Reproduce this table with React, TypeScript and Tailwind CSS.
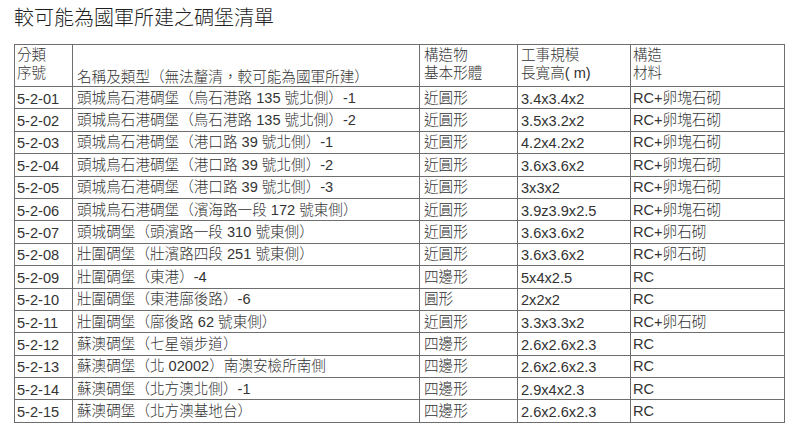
const rows: [string, string, string, string, string][] = [
  ['5-2-01', '頭城烏石港碉堡（烏石港路 135 號北側）-1', '近圓形', '3.4x3.4x2', 'RC+卵塊石砌'],
  ['5-2-02', '頭城烏石港碉堡（烏石港路 135 號北側）-2', '近圓形', '3.5x3.2x2', 'RC+卵塊石砌'],
  ['5-2-03', '頭城烏石港碉堡（港口路 39 號北側）-1', '近圓形', '4.2x4.2x2', 'RC+卵塊石砌'],
  ['5-2-04', '頭城烏石港碉堡（港口路 39 號北側）-2', '近圓形', '3.6x3.6x2', 'RC+卵塊石砌'],
  ['5-2-05', '頭城烏石港碉堡（港口路 39 號北側）-3', '近圓形', '3x3x2', 'RC+卵塊石砌'],
  ['5-2-06', '頭城烏石港碉堡（濱海路一段 172 號東側）', '近圓形', '3.9z3.9x2.5', 'RC+卵塊石砌'],
  ['5-2-07', '頭城碉堡（頭濱路一段 310 號東側）', '近圓形', '3.6x3.6x2', 'RC+卵石砌'],
  ['5-2-08', '壯圍碉堡（壯濱路四段 251 號東側）', '近圓形', '3.6x3.6x2', 'RC+卵石砌'],
  ['5-2-09', '壯圍碉堡（東港）-4', '四邊形', '5x4x2.5', 'RC'],
  ['5-2-10', '壯圍碉堡（東港廍後路）-6', '圓形', '2x2x2', 'RC'],
  ['5-2-11', '壯圍碉堡（廍後路 62 號東側）', '近圓形', '3.3x3.3x2', 'RC+卵石砌'],
  ['5-2-12', '蘇澳碉堡（七星嶺步道）', '四邊形', '2.6x2.6x2.3', 'RC'],
  ['5-2-13', '蘇澳碉堡（北 02002）南澳安檢所南側', '四邊形', '2.6x2.6x2.3', 'RC'],
  ['5-2-14', '蘇澳碉堡（北方澳北側）-1', '四邊形', '2.9x4x2.3', 'RC'],
  ['5-2-15', '蘇澳碉堡（北方澳基地台）', '四邊形', '2.6x2.6x2.3', 'RC'],
]

// every cell shares the same thin grey rule
const cell = 'border border-[#6e6e6e] px-[2px] py-0 font-light text-left'

export default function App() {
  return (
    <div className="min-h-[433px] w-[800px] bg-white px-[14px] pt-[4px] text-[#333] [font-family:'Liberation_Sans','Noto_Sans_CJK_TC',sans-serif]">
      <h1 className="text-[20px] leading-[28px] font-light text-[#1f1f1f]">較可能為國軍所建之碉堡清單</h1>

      <table className="mt-[12px] w-[770px] table-fixed border-collapse text-[14.6px] leading-[18px]">
        <colgroup>
          <col className="w-[58px]" />
          <col className="w-[347px]" />
          <col className="w-[98px]" />
          <col className="w-[113px]" />
          <col className="w-[154px]" />
        </colgroup>
        <thead>
          <tr className="h-[42px]">
            <th className={`${cell} align-top pt-[1px]`}>
              分類
              <br />
              序號
            </th>
            <th className={`${cell} px-[4px] align-bottom`}>名稱及類型（無法釐清，較可能為國軍所建）</th>
            <th className={`${cell} px-[4px] align-top pt-[1px]`}>
              構造物
              <br />
              基本形體
            </th>
            <th className={`${cell} px-[3px] align-top pt-[1px]`}>
              工事規模
              <br />
              長寬高( m)
            </th>
            <th className={`${cell} align-top pt-[1px]`}>
              構造
              <br />
              材料
            </th>
          </tr>
        </thead>
        <tbody>
          {rows.map((r) => (
            <tr key={r[0]} className="h-[22.4px]">
              <td className={`${cell} pt-[2px]`}>{r[0]}</td>
              <td className={`${cell} px-[4px]`}>{r[1]}</td>
              <td className={`${cell} px-[4px]`}>{r[2]}</td>
              <td className={`${cell} px-[3px] pt-[2px]`}>{r[3]}</td>
              <td className={cell}>{r[4]}</td>
            </tr>
          ))}
        </tbody>
      </table>
    </div>
  )
}
